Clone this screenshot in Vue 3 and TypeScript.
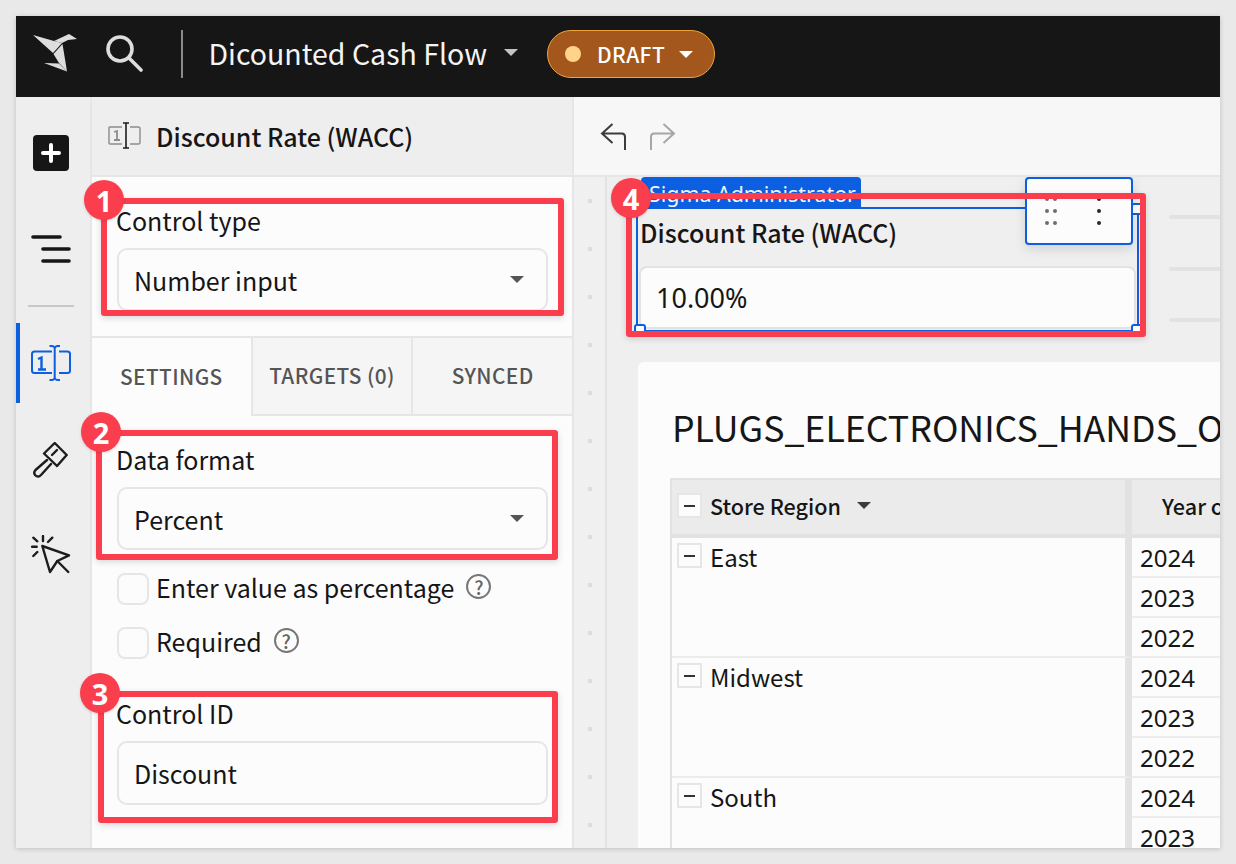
<script setup lang="ts">
interface Region {
  name: string
  years: string[]
}

const regions: Region[] = [
  { name: 'East', years: ['2024', '2023', '2022'] },
  { name: 'Midwest', years: ['2024', '2023', '2022'] },
  { name: 'South', years: ['2024', '2023', '2022'] },
]

const tabs = ['SETTINGS', 'TARGETS (0)', 'SYNCED']

const marks = [
  { n: 1, box: 'box-1', badge: 'badge-1' },
  { n: 2, box: 'box-2', badge: 'badge-2' },
  { n: 3, box: 'box-3', badge: 'badge-3' },
  { n: 4, box: 'box-4', badge: 'badge-4' },
]
</script>

<template>
  <div class="page">
    <div class="window">
      <header class="topbar">
        <svg class="logo" width="46" height="40" viewBox="0 0 46 40">
          <path d="M0 1 L21 7 L29 9 L20 19 Z" fill="#ddd" />
          <path d="M21 7 L36 0 L44 5 L35 6 L29 9 Z" fill="#ddd" />
          <path d="M20.5 20 L29.5 10 L34 37.5 L26 29 Z" fill="#ddd" />
          <path d="M11 29 L26 29.5 L34 37.5 Z" fill="#ddd" />
        </svg>
        <svg class="search" width="38" height="40" viewBox="0 0 38 40" fill="none" stroke="#ddd" stroke-width="3.6" stroke-linecap="round">
          <circle cx="15" cy="15" r="12" />
          <path d="M24 24 L36 36" />
        </svg>
        <span class="top-sep"></span>
        <span class="doc-title">Dicounted Cash Flow</span>
        <span class="caret doc-caret"></span>
        <button class="draft">
          <span class="draft-dot"></span>
          DRAFT
          <span class="caret draft-caret"></span>
        </button>
      </header>

      <div class="body-row">
        <nav class="rail">
          <div class="plus">
            <svg width="22" height="22" viewBox="0 0 22 22" stroke="#fff" stroke-width="4" stroke-linecap="round">
              <path d="M11 3 V19 M3 11 H19" />
            </svg>
          </div>
          <svg class="menu" width="40" height="28" viewBox="0 0 40 28" stroke="#161616" stroke-width="3.6" stroke-linecap="round">
            <path d="M2 2 H29 M12 14 H38 M12 26 H38" />
          </svg>
          <span class="rail-sep"></span>
          <div class="rail-active">
            <svg width="40" height="36" viewBox="0 0 40 36" fill="none" stroke="#0b5fe0" stroke-width="2">
              <path d="M21 6.5 H3.5 Q1 6.5 1 9 V25.5 Q1 28 3.5 28 H21" />
              <path d="M28 6.5 H36.5 Q39 6.5 39 9 V25.5 Q39 28 36.5 28 H28" />
              <path d="M23.7 3.5 V32.5 M18.5 1 Q23.7 0.5 23.7 3.5 Q23.7 0.5 29 1 M18.5 35 Q23.7 35.5 23.7 32.5 Q23.7 35.5 29 35" />
              <path d="M7 14 L10.5 12.5 V24 M7 24.5 H15" stroke-width="2.4" />
            </svg>
          </div>
          <svg class="brush" width="36" height="38" viewBox="0 0 36 38" fill="none" stroke="#1c1c1c" stroke-width="2.4" stroke-linejoin="round" stroke-linecap="round">
            <path d="M21.7 1 L33.7 13 L24 24 L11 11.5 Z" />
            <path d="M24 8 L19 13" />
            <path d="M14 18 L2.5 28 Q0 31 2.5 33.5 Q5 36 8 33 L18 22" />
          </svg>
          <svg class="cursor" width="40" height="42" viewBox="0 0 40 42" fill="none" stroke="#1c1c1c" stroke-width="2.4" stroke-linejoin="round" stroke-linecap="round">
            <path d="M11.3 11 L38 20.3 L26.3 26 L19 37 Z" />
            <path d="M26.3 26 L37.3 37" />
            <path d="M12 1 V6 M1 11.7 H5.7 M21.3 2.7 L17 7 M2.3 21 L6.3 17 M2.3 2.7 L6.3 6.3" />
          </svg>
        </nav>

        <aside class="panel">
          <div class="panel-head">
            <svg width="34" height="28" viewBox="0 0 34 28" fill="none" stroke="#8c8c8c" stroke-width="1.4">
              <path d="M14 5 H2 Q1 5 1 6 V21 Q1 22 2 22 H14" />
              <path d="M22 5 H30 Q32 5 32 6 V21 Q32 22 30 22 H22" />
              <path d="M6 10 L9 9 V18 M6 18 H12" stroke-width="1.8" />
              <path d="M15 1 H21 M18 1 V26 M15 26 H21" stroke="#1c1c1c" stroke-width="1.6" />
            </svg>
            <span class="panel-title">Discount Rate (WACC)</span>
          </div>

          <div class="section section-type">
            <label class="field-label">Control type</label>
            <div class="field">
              Number input
              <span class="caret field-caret"></span>
            </div>
          </div>

          <div class="tabs">
            <div v-for="(t, i) in tabs" :key="t" class="tab" :class="{ on: i === 0 }">{{ t }}</div>
          </div>

          <div class="section section-format">
            <label class="field-label">Data format</label>
            <div class="field">
              Percent
              <span class="caret field-caret"></span>
            </div>
            <div class="check-row">
              <span class="check"></span>
              Enter value as percentage
              <span class="help">?</span>
            </div>
            <div class="check-row">
              <span class="check"></span>
              Required
              <span class="help">?</span>
            </div>
            <label class="field-label id-label">Control ID</label>
            <div class="field id-field">Discount</div>
          </div>
        </aside>

        <main class="workspace">
          <div class="toolbar">
            <svg width="28" height="28" viewBox="0 0 28 28" fill="none" stroke="#3c3c3c" stroke-width="2">
              <path d="M12.5 1 L2 10.5 L12.5 20 M2 10.5 H22 Q25 10.5 25 14 V27" />
            </svg>
            <svg width="28" height="28" viewBox="0 0 28 28" fill="none" stroke="#a6a6a6" stroke-width="2">
              <path d="M14.5 1 L25 10.5 L14.5 20 M25 10.5 H5 Q2 10.5 2 14 V27" />
            </svg>
          </div>

          <div class="canvas-wrap">
            <div class="gutter"></div>
            <div class="canvas">
              <span class="user-tag">Sigma Administrator</span>
              <div class="control">
                <div class="control-title">Discount Rate (WACC)</div>
                <div class="control-input">10.00%</div>
                <span class="handle h-bl"></span>
                <span class="handle h-br"></span>
                <span class="handle h-tr"></span>
              </div>
              <div class="tool-pop">
                <span class="grip">
                  <i v-for="d in 6" :key="d"></i>
                </span>
                <span class="kebab">
                  <i v-for="d in 3" :key="d"></i>
                </span>
              </div>
              <span class="stub stub-1"></span>
              <span class="stub stub-2"></span>
              <span class="stub stub-3"></span>

              <section class="card">
                <h2 class="card-title">PLUGS_ELECTRONICS_HANDS_ON_LAB</h2>
                <div class="table">
                  <div class="th th-region">
                    <span class="minus"></span>
                    Store Region
                    <span class="caret th-caret"></span>
                  </div>
                  <div class="th th-year">Year of Date</div>
                  <template v-for="r in regions" :key="r.name">
                    <div class="region-cell">
                      <span class="minus"></span>
                      {{ r.name }}
                    </div>
                    <div class="year-col">
                      <div v-for="y in r.years" :key="y" class="year-cell">{{ y }}</div>
                    </div>
                  </template>
                </div>
              </section>
            </div>
          </div>
        </main>
      </div>
    </div>

    <template v-for="m in marks" :key="m.n">
      <div class="red-box" :class="m.box"></div>
      <div class="badge" :class="m.badge">{{ m.n }}</div>
    </template>
  </div>
</template>

<style>
html,
body {
  margin: 0;
  background: #e9e9e9;
}
</style>

<style scoped>
* {
  box-sizing: border-box;
}

.page {
  position: relative;
  width: 1236px;
  height: 864px;
  padding: 16px;
  overflow: hidden;
  background: #e9e9e9;
  color: #161616;
  font-family: "Noto Sans CJK SC", "Noto Sans", sans-serif;
}

.window {
  width: 1204px;
  height: 832px;
  display: flex;
  flex-direction: column;
  overflow: hidden;
  background: #fcfcfc;
  box-shadow: 0 1px 5px rgba(0, 0, 0, 0.18);
}

.topbar {
  height: 81px;
  flex: none;
  display: flex;
  align-items: center;
  background: #161616;
  color: #fff;
  padding: 0 0 5px 17px;
}

.search {
  margin-left: 26px;
}

.top-sep {
  width: 1.5px;
  height: 48px;
  margin-left: 38px;
  background: #8a8a8a;
}

.doc-title {
  margin: 0 0 3px 26px;
  font-size: 28.5px;
  line-height: 40px;
  font-weight: 400;
  color: #f4f4f4;
}

.caret {
  display: inline-block;
  width: 0;
  height: 0;
  border-left: 7px solid transparent;
  border-right: 7px solid transparent;
  border-top: 7px solid #3c3c3c;
}

.doc-caret {
  margin-left: 17px;
  margin-top: -3px;
  border-top-color: #c4c4c4;
}

.draft {
  margin-left: 29px;
  height: 48px;
  width: 168px;
  padding: 0 0 0 17px;
  display: flex;
  align-items: center;
  border: 1.5px solid #f2a33a;
  border-radius: 24px;
  background: #a3571c;
  color: #fff;
  font-family: inherit;
  font-size: 21px;
  font-weight: 500;
  letter-spacing: 0.4px;
}

.draft-dot {
  width: 16px;
  height: 16px;
  margin-right: 16px;
  border-radius: 50%;
  background: #ffd38a;
}

.draft-caret {
  margin-left: 14px;
  border-top-color: #fff;
}

.body-row {
  flex: 1;
  min-height: 0;
  display: flex;
}

.rail {
  width: 76px;
  flex: none;
  display: flex;
  flex-direction: column;
  align-items: center;
  background: #eee;
  border-right: 2px solid #e6e6e6;
  padding: 38px 4px 0 0;
}

.plus {
  width: 36px;
  height: 36px;
  display: flex;
  align-items: center;
  justify-content: center;
  border-radius: 4px;
  background: #161616;
}

.menu {
  margin-top: 64px;
}

.rail-sep {
  width: 46px;
  height: 2px;
  margin-top: 42px;
  background: #c8c8c8;
}

.rail-active {
  align-self: stretch;
  height: 80px;
  margin: 16px -4px 0 0;
  display: flex;
  align-items: center;
  justify-content: center;
  border-left: 4px solid #0b5fe0;
  padding-right: 8px;
}

.brush {
  margin-top: 39px;
}

.cursor {
  margin-top: 55px;
}

.panel {
  width: 482px;
  flex: none;
  display: flex;
  flex-direction: column;
  background: #fcfcfc;
  border-right: 2px solid #e6e6e6;
}

.panel-head {
  height: 80px;
  flex: none;
  display: flex;
  align-items: center;
  gap: 14px;
  padding-left: 16px;
  background: #eee;
  border-bottom: 2px solid #e6e6e6;
}

.panel-title {
  font-size: 25px;
  font-weight: 500;
}

.section {
  padding: 0 24px 0 25px;
}

.section-type {
  height: 161px;
  padding-top: 26px;
  border-bottom: 2px solid #e6e6e6;
}

.field-label {
  display: block;
  height: 36px;
  margin-left: -1px;
  font-size: 25px;
  line-height: 34px;
}

.field {
  position: relative;
  height: 63px;
  margin-top: 9px;
  padding-left: 15px;
  display: flex;
  align-items: center;
  font-size: 25px;
  border: 2px solid #e6e6e6;
  border-radius: 10px;
  background: #fcfcfc;
}

.field-caret {
  position: absolute;
  right: 22px;
  top: 26px;
  border-top-color: #555;
}

.tabs {
  height: 78px;
  flex: none;
  display: flex;
}

.tab {
  flex: 1;
  display: flex;
  align-items: center;
  justify-content: center;
  padding-bottom: 2px;
  font-size: 20.8px;
  font-weight: 500;
  letter-spacing: 0.4px;
  color: #555;
  background: #f5f5f5;
  border-left: 2px solid #e6e6e6;
  border-bottom: 2px solid #e6e6e6;
}

.tab.on {
  background: #fcfcfc;
  border-left: none;
  border-bottom: none;
}

.section-format {
  padding-top: 26px;
}

.check-row {
  height: 31px;
  margin-top: 23px;
  padding-bottom: 4px;
  display: flex;
  align-items: center;
  font-size: 25px;
}

.check {
  width: 32px;
  height: 32px;
  margin: 4px 7px 0 0;
  border: 2px solid #e6e6e6;
  border-radius: 8px;
  background: #fcfcfc;
}

.help {
  width: 25px;
  height: 25px;
  margin-left: 12px;
  display: flex;
  align-items: center;
  justify-content: center;
  border: 2px solid #777;
  border-radius: 50%;
  color: #666;
  font-size: 19px;
  font-weight: 500;
}

.id-label {
  margin-top: 38px;
}

.id-field {
  height: 64px;
}

.workspace {
  flex: 1;
  min-width: 0;
  display: flex;
  flex-direction: column;
}

.toolbar {
  height: 80px;
  flex: none;
  display: flex;
  align-items: center;
  gap: 21px;
  padding-left: 26px;
  padding-top: 2px;
  background: #f7f7f7;
  border-bottom: 2px solid #e6e6e6;
}

.canvas-wrap {
  flex: 1;
  min-height: 0;
  display: flex;
}

.gutter {
  width: 33px;
  flex: none;
  background-color: #f0f0f0;
  background-image: radial-gradient(circle, #dcdcdc 2px, transparent 2.6px);
  background-size: 32px 48px;
  background-position: 0 0;
  border-right: 2px solid #e2e2e2;
}

.canvas {
  position: relative;
  flex: 1;
  min-width: 0;
  overflow: hidden;
  background: #efefef;
}

.user-tag {
  position: absolute;
  left: 34px;
  top: 0;
  width: 220px;
  height: 31px;
  padding-left: 8px;
  border-radius: 4px 4px 0 0;
  background: #0b5fe0;
  color: #f2f6ff;
  font-family: "Noto Sans", sans-serif;
  font-size: 21.4px;
  line-height: 33px;
  white-space: nowrap;
}

.control {
  position: absolute;
  left: 29px;
  top: 30px;
  width: 503px;
  height: 125px;
  padding: 0 1px;
  border: 2px solid #0b5fe0;
}

.control-title {
  height: 54px;
  padding-left: 1px;
  font-size: 25px;
  font-weight: 500;
  line-height: 47px;
}

.control-input {
  height: 63px;
  margin-top: 3px;
  padding-left: 15px;
  display: flex;
  align-items: center;
  font-family: "Noto Sans", sans-serif;
  font-size: 27px;
  border: 2px solid #e2e2e2;
  border-radius: 8px;
  background: #fcfcfc;
}

.handle {
  position: absolute;
  width: 12px;
  height: 12px;
  background: #fff;
  border: 2px solid #0b5fe0;
  border-radius: 3px 3px 0 0;
}

.h-bl {
  left: -4px;
  bottom: -6px;
}

.h-br {
  right: -6px;
  bottom: -6px;
}

.h-tr {
  right: -6px;
  top: -6px;
}

.tool-pop {
  position: absolute;
  left: 418px;
  top: 0;
  width: 108px;
  height: 68px;
  border: 2px solid #0b5fe0;
  border-radius: 4px;
  background: #fcfcfc;
  box-shadow: 0 4px 12px rgba(0, 0, 0, 0.12);
}

.grip {
  position: absolute;
  left: 18px;
  top: 18px;
  display: grid;
  grid-template-columns: 4px 4px;
  column-gap: 4px;
  row-gap: 8px;
}

.grip i,
.kebab i {
  display: block;
  width: 4px;
  height: 4px;
  border-radius: 50%;
  background: #6e6e6e;
}

.kebab {
  position: absolute;
  left: 70px;
  top: 18px;
  display: grid;
  row-gap: 8px;
}

.kebab i {
  background: #2a2a2a;
}

.stub {
  position: absolute;
  left: 562px;
  width: 60px;
  height: 4px;
  border-radius: 2px;
  background: #e2e2e2;
}

.stub-1 {
  top: 38px;
}

.stub-2 {
  top: 90px;
}

.stub-3 {
  top: 141px;
}

.card {
  position: absolute;
  left: 31px;
  top: 185px;
  width: 600px;
  height: 500px;
  padding: 40px 0 0 32px;
  border-radius: 6px 0 0 0;
  background: #fcfcfc;
}

.card-title {
  margin: 0;
  height: 50px;
  padding-left: 2px;
  font-size: 35.7px;
  line-height: 50px;
  font-weight: 400;
  white-space: nowrap;
}

.table {
  display: grid;
  grid-template-columns: 460px 1fr;
  margin-top: 26px;
  border-left: 2px solid #e2e2e2;
  border-top: 2px solid #e2e2e2;
}

.th {
  height: 58px;
  display: flex;
  align-items: center;
  padding-bottom: 4px;
  font-size: 21.6px;
  font-weight: 500;
  background: #ebebeb;
  border-bottom: 4px solid #e2e2e2;
  white-space: nowrap;
}

.th-region {
  padding-left: 5px;
  border-right: 7px solid #e2e2e2;
}

.th-year {
  padding-left: 30px;
}

.minus {
  position: relative;
  width: 25px;
  height: 25px;
  margin-right: 8px;
  flex: none;
  background: #fcfcfc;
  border: 2px solid #e6e6e6;
}

.minus::after {
  content: "";
  position: absolute;
  left: 5px;
  right: 5px;
  top: 10px;
  height: 2px;
  background: #333;
}

.th-caret {
  margin-left: 16px;
  border-top-color: #3c3c3c;
}

.region-cell {
  height: 120px;
  padding: 5px 0 0 5px;
  display: flex;
  align-items: flex-start;
  font-size: 24px;
  line-height: 28px;
  border-right: 7px solid #e2e2e2;
  border-bottom: 2px solid #ececec;
}

.year-cell {
  height: 40px;
  padding-left: 8px;
  display: flex;
  align-items: center;
  font-family: "Noto Sans", sans-serif;
  font-size: 24px;
  border-bottom: 2px solid #ececec;
}
</style>

<style scoped>
.red-box {
  position: absolute;
  border: 6px solid #fb3e4e;
  border-radius: 3px;
  box-shadow: 0 2px 6px rgba(0, 0, 0, 0.15);
}

.box-1 {
  left: 101px;
  top: 198px;
  width: 463px;
  height: 118px;
}

.box-2 {
  left: 96px;
  top: 430px;
  width: 462px;
  height: 130px;
}

.box-3 {
  left: 98px;
  top: 691px;
  width: 460px;
  height: 132px;
}

.box-4 {
  left: 626px;
  top: 193px;
  width: 520px;
  height: 144px;
}

.badge {
  position: absolute;
  width: 40px;
  height: 40px;
  display: flex;
  align-items: center;
  justify-content: center;
  border-radius: 50%;
  background: #fb3e4e;
  color: #fff;
  font-family: "Open Sans", sans-serif;
  font-size: 29px;
  font-weight: 700;
  box-shadow: 0 1px 3px rgba(0, 0, 0, 0.15);
}

.badge-1 {
  left: 84px;
  top: 180px;
}

.badge-2 {
  left: 81px;
  top: 412px;
}

.badge-3 {
  left: 80px;
  top: 673px;
}

.badge-4 {
  left: 611px;
  top: 178px;
}
</style>
